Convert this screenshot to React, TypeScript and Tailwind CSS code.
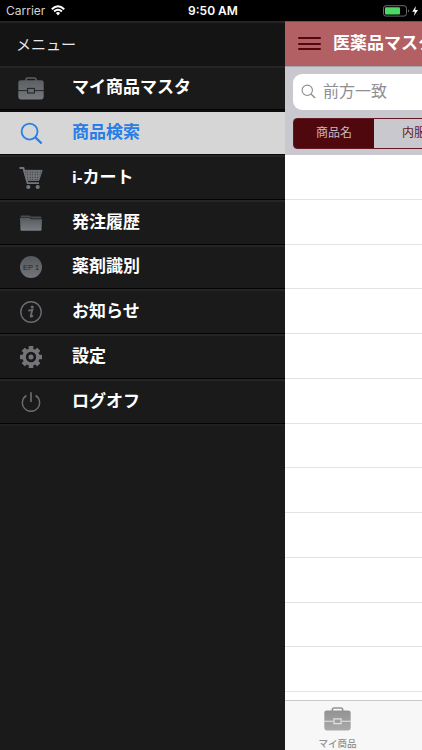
import type { ReactNode } from 'react';

const BriefcaseIcon = ({ id, from, to, line, className }: { id: string; from: string; to: string; line: string; className: string }) => (
  <svg viewBox="0 0 26 23" className={className}>
    <defs>
      <linearGradient id={id} x1="0" y1="0" x2="0" y2="1">
        <stop offset="0" stopColor={from} />
        <stop offset="1" stopColor={to} />
      </linearGradient>
    </defs>
    <path d="M8 4V2.6Q8 .9 9.8 .9H16.2Q18 .9 18 2.6V4" fill="none" stroke={from} strokeWidth="1.5" />
    <rect x=".3" y="3.2" width="25.4" height="19.3" rx="2.4" fill={`url(#${id})`} />
    <path d="M0 13.6H9M17 13.6H26" stroke={line} strokeWidth="1" />
    <rect x="9.6" y="11.4" width="6.8" height="4.6" fill="none" stroke={line} strokeWidth="1.1" />
  </svg>
);

const SearchIcon = ({ className, width }: { className: string; width: number }) => (
  <svg viewBox="0 0 24 24" className={className} fill="none" stroke="currentColor" strokeWidth={width}>
    <circle cx="10" cy="10" r="8.3" />
    <path d="M16 16L22.6 22.4" strokeWidth={width * 1.25} />
  </svg>
);

const CartIcon = () => (
  <svg viewBox="0 0 24 24" className="h-6 w-6">
    <defs>
      <pattern id="mesh" width="2.5" height="2.5" patternUnits="userSpaceOnUse">
        <rect width="2.5" height="2.5" fill="#73767a" />
        <circle cx="1.2" cy="1.2" r=".6" fill="#292a2c" />
      </pattern>
    </defs>
    <path d="M.5 2H4.4L8.6 17.2H20" fill="none" stroke="#73767a" strokeWidth="1.8" />
    <path d="M4.6 4.3H23.2L19.8 14.5H7.6Z" fill="url(#mesh)" stroke="#73767a" strokeWidth=".8" />
    <circle cx="9.3" cy="21" r="2.1" fill="#73767a" />
    <circle cx="18.7" cy="21" r="2.1" fill="#73767a" />
  </svg>
);

const FolderIcon = () => (
  <svg viewBox="0 0 22 16" className="h-4 w-[22px]">
    <defs>
      <linearGradient id="folder" x1="0" y1="0" x2="0" y2="1">
        <stop offset="0" stopColor="#56595d" />
        <stop offset="1" stopColor="#7b7e83" />
      </linearGradient>
    </defs>
    <path d="M.6 3V1.2Q.6.4 1.5.4H9.5L10.8 1.4H20.5Q21.3 1.4 21.3 2.2V3.6H11.8L10.4 2.4H.6Z" fill="#4b4d50" />
    <path d="M0 3H9.9L11.2 4.2H22L21.5 15Q21.4 15.8 20.6 15.8H1.4Q.6 15.8.5 15Z" fill="url(#folder)" />
  </svg>
);

const PillIcon = () => (
  <div className="flex h-[22px] w-[22px] items-center justify-center rounded-full bg-linear-to-b from-[#56595c] to-[#727579]">
    <span className="text-[7.5px] leading-none whitespace-nowrap text-[#222426]">EP 1</span>
  </div>
);

const InfoIcon = () => (
  <svg viewBox="0 0 22 22" className="h-[22px] w-[22px]">
    <circle cx="11" cy="11" r="10.2" fill="none" stroke="#696c70" strokeWidth="1.4" />
    <circle cx="12.2" cy="6" r="1.6" fill="#696c70" />
    <path d="M8.2 9.7Q10.2 9.4 12.4 8.8L10.7 15.1Q10.4 16.5 13 14.5" fill="none" stroke="#696c70" strokeWidth="1.8" />
  </svg>
);

const GearIcon = () => (
  <svg viewBox="-11 -11 22 22" className="h-[22px] w-[22px]" fill="#737579">
    {[0, 45, 90, 135].map((angle) => (
      <rect key={angle} x="-2.3" y="-11" width="4.6" height="22" rx=".5" transform={`rotate(${angle})`} />
    ))}
    <circle r="8.6" />
    <circle r="5.2" fill="#1a1a1a" />
    <circle r="2.5" />
  </svg>
);

const PowerIcon = () => (
  <svg viewBox="0 0 20 20" className="h-5 w-5" fill="none" stroke="#696b6e" strokeWidth="1.5">
    <path d="M5.4 3.5A8.6 8.6 0 1 0 14.6 3.5" />
    <path d="M10 .3V10" strokeWidth="1.7" />
  </svg>
);

const MENU_ITEMS: { label: string; icon: ReactNode; selected?: boolean }[] = [
  { label: 'マイ商品マスタ', icon: <BriefcaseIcon id="menu-case" from="#5c5f63" to="#75787c" line="#242527" className="h-[23px] w-[26px]" /> },
  { label: '商品検索', icon: <SearchIcon className="h-[23px] w-[23px] text-[#277ee8]" width={1.9} />, selected: true },
  { label: 'i-カート', icon: <CartIcon /> },
  { label: '発注履歴', icon: <FolderIcon /> },
  { label: '薬剤識別', icon: <PillIcon /> },
  { label: 'お知らせ', icon: <InfoIcon /> },
  { label: '設定', icon: <GearIcon /> },
  { label: 'ログオフ', icon: <PowerIcon /> },
];

const StatusBar = () => (
  <div className="grid h-[21px] shrink-0 grid-cols-3 items-center bg-black px-1.5 text-[12px] text-white">
    <div className="flex items-center gap-1.5 font-['Inter']">
      <span className="text-[#d4d4d4]">Carrier</span>
      <svg viewBox="0 0 14 11" className="h-[11px] w-3.5" fill="none" stroke="#fff" strokeWidth="2">
        <path d="M.8 4.2Q7-1.8 13.2 4.2M3.1 6.5Q7 2.9 10.9 6.5" />
        <path d="M4.9 8Q7 6.2 9.1 8L7 10.4Z" fill="#fff" stroke="none" />
      </svg>
    </div>
    <span className="pl-1 text-center font-['Inter'] font-semibold">9:50 AM</span>
    <div className="flex items-center justify-end">
      <svg viewBox="0 0 37 12" className="-mr-1 h-3 w-[37px]">
        <rect x=".5" y=".7" width="23" height="10.4" rx="2.5" fill="none" stroke="#777" strokeWidth=".9" />
        <rect x="2" y="2.2" width="15" height="7.4" rx="1" fill="#4cd964" />
        <path d="M25 4.2Q27 5.9 25 7.6Z" fill="#777" />
        <path d="M32.8 1L29.3 6.7H31.8L30.9 11L35 5.1H32.3Z" fill="#fff" />
      </svg>
    </div>
  </div>
);

const SideMenu = () => (
  <nav className="flex w-[285px] shrink-0 flex-col bg-[#1a1a1a]">
    <h2 className="flex h-[44.5px] items-center border-t-2 border-[#242426] bg-[#141414] pt-px pl-4 text-[15px] text-[#e8e8e8]">メニュー</h2>
    {MENU_ITEMS.map(({ label, icon, selected }) => (
      <div
        key={label}
        className={
          selected
            ? 'flex h-[44.75px] items-center border-t-2 border-b border-t-[#0c0c0c] border-b-[#090909] bg-[#d6d6d6] text-[#277ee8]'
            : 'flex h-[44.75px] items-center border-t-2 border-b border-t-[#252527] border-b-[#050505] bg-[#1a1a1a] text-white'
        }
      >
        <div className="flex w-[62px] items-center justify-center">{icon}</div>
        <span className="pl-2.5 text-[17px] leading-6 font-bold">{label}</span>
      </div>
    ))}
    <div className="h-0.5 bg-[#202021]" />
  </nav>
);

const MasterPanel = () => (
  <main className="flex w-[137px] flex-col overflow-hidden bg-white">
    <header className="flex h-[44.5px] shrink-0 items-center gap-3 border-t border-[#87484b] bg-[#b36064] pl-[13px] whitespace-nowrap">
      <div className="flex w-[23px] shrink-0 flex-col gap-[3.5px]">
        <div className="h-0.5 rounded bg-[#56070c]" />
        <div className="h-0.5 rounded bg-[#56070c]" />
        <div className="h-0.5 rounded bg-[#56070c]" />
      </div>
      <h1 className="text-[17px] font-bold text-white">医薬品マスタ</h1>
    </header>
    <div className="h-[89.5px] shrink-0 border-t border-[#aaa4ac] bg-[#c9c8ce] pt-[7px] pl-2">
      <div className="flex h-[36px] w-[220px] items-center gap-[7px] rounded-[9px] bg-white pl-2 text-[#8e8e93]">
        <SearchIcon className="h-[15px] w-[15px]" width={1.8} />
        <span className="text-[16px] leading-5">前方一致</span>
      </div>
      <div className="mt-2 flex h-[31px] w-[243px] rounded border border-[#641a22] text-[12px] whitespace-nowrap">
        <div className="flex w-[80px] items-center justify-center rounded-l-[2px] bg-[#4f080e] text-[#cbb9bf]">商品名</div>
        <div className="flex w-[80px] items-center pl-[28px] text-[#641a22]">内服</div>
      </div>
    </div>
    <div className="min-h-0 flex-1 overflow-hidden">
      {Array.from({ length: 13 }, (_, i) => (
        <div key={i} className="h-[44.78px] border-b border-[#e2e2e3]" />
      ))}
    </div>
    <footer className="flex h-[50px] shrink-0 flex-col items-center border-t border-[#c8c8c8] bg-[#f7f7f7] pr-8 pt-[6px]">
      <BriefcaseIcon id="tab-case" from="#929292" to="#aaaaaa" line="#e8e8e8" className="h-6 w-[27px]" />
      <span className="mt-[7px] text-[9.5px] leading-3 font-medium text-[#929292]">マイ商品</span>
    </footer>
  </main>
);

export default function App() {
  return (
    <div className="flex h-[750px] w-[422px] flex-col overflow-hidden bg-black font-['Liberation_Sans','Noto_Sans_CJK_JP',sans-serif]">
      <StatusBar />
      <div className="flex min-h-0 flex-1">
        <SideMenu />
        <MasterPanel />
      </div>
    </div>
  );
}
